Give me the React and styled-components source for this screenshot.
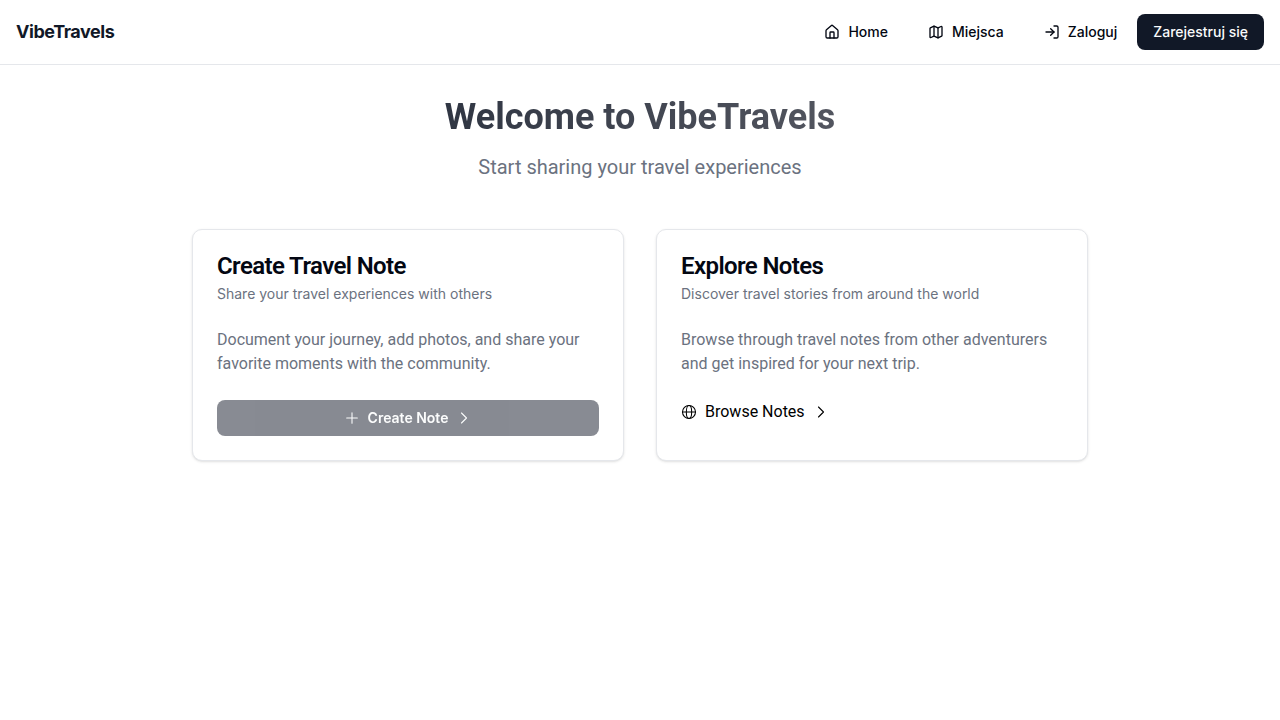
import React from "react";
import styled, { createGlobalStyle } from "styled-components";
import { House, Map, LogIn } from "lucide-react";

const uiFont = `Inter, "Liberation Sans", sans-serif`;
const textFont = `Roboto, "Liberation Sans", sans-serif`;

const GlobalStyle = createGlobalStyle`
  *, *::before, *::after { box-sizing: border-box; }
  body {
    margin: 0;
    background: #ffffff;
    color: #030712;
    font-family: ${textFont};
    font-size: 16px;
    line-height: 24px;
    -webkit-font-smoothing: antialiased;
  }
  h1, h2, p { margin: 0; }
  a { color: inherit; text-decoration: none; }
`;

const Header = styled.header`
  display: flex;
  align-items: center;
  justify-content: space-between;
  min-height: 65px;
  padding: 0 16px;
  border-bottom: 1px solid #e5e7eb;
`;

const Brand = styled.a`
  font-family: ${uiFont};
  font-size: 18px;
  line-height: 28px;
  font-weight: 700;
  letter-spacing: -0.025em;
  color: #111827;
`;

const Nav = styled.nav`
  display: flex;
  align-items: center;
  gap: 8px;
`;

const AuthLinks = styled.div`
  display: flex;
  align-items: center;
  gap: 4px;
`;

const NavLink = styled.a`
  display: inline-flex;
  align-items: center;
  gap: 8px;
  height: 36px;
  padding: 0 16px;
  border-radius: 8px;
  font-family: ${uiFont};
  font-size: 14px;
  line-height: 20px;
  font-weight: 500;
  color: ${(p) => (p.$primary ? "#f9fafb" : "#030712")};
  background: ${(p) => (p.$primary ? "#111827" : "transparent")};
`;

const Main = styled.main`
  padding: 32px 16px;
`;

const Hero = styled.section`
  display: flex;
  flex-direction: column;
  align-items: center;
  gap: 16px;
  margin-bottom: 48px;
  text-align: center;
`;

const HeroTitle = styled.h1`
  font-size: 36px;
  line-height: 40px;
  font-weight: 700;
  color: transparent;
  background: linear-gradient(to right, #303643, #52555f);
  background-clip: text;
`;

const HeroText = styled.p`
  font-size: 20px;
  line-height: 28px;
  color: #6b7280;
`;

const CardGrid = styled.section`
  display: grid;
  grid-template-columns: repeat(auto-fit, minmax(280px, 1fr));
  gap: 32px;
  max-width: 896px;
  margin: 0 auto;
`;

const Card = styled.article`
  padding: 24px;
  border: 1px solid #e5e7eb;
  border-radius: 10px;
  background: #ffffff;
  box-shadow: 0 1px 3px rgba(0, 0, 0, 0.1), 0 1px 2px -1px rgba(0, 0, 0, 0.1);
`;

const CardTitle = styled.h2`
  font-size: 24px;
  line-height: 24px;
  font-weight: 600;
  letter-spacing: -0.025em;
`;

const CardHint = styled.p`
  margin-top: 6px;
  font-family: ${uiFont};
  font-size: 14px;
  line-height: 20px;
  color: #6b7280;
`;

const CardText = styled.p`
  margin: 24px 0;
  color: #6b7280;
`;

const CreateButton = styled.button`
  display: flex;
  align-items: center;
  justify-content: center;
  gap: 8px;
  width: 100%;
  height: 36px;
  padding: 0 16px;
  border: 0;
  border-radius: 8px;
  background: #111827;
  color: #f9fafb;
  font-family: ${uiFont};
  font-size: 14px;
  line-height: 20px;
  font-weight: 600;
  opacity: 0.5;
`;

const BrowseLink = styled.a`
  display: inline-flex;
  align-items: center;
  gap: 8px;
  vertical-align: top;
  color: #000000;
`;

const Glyph = ({ children }) => (
  <svg
    width="16"
    height="16"
    viewBox="0 0 24 24"
    fill="none"
    stroke="currentColor"
    strokeWidth="1.6"
    strokeLinecap="round"
    strokeLinejoin="round"
    aria-hidden="true"
  >
    {children}
  </svg>
);

const PlusGlyph = () => (
  <Glyph>
    <path d="M12 4v16M4 12h16" />
  </Glyph>
);

const ChevronGlyph = () => (
  <Glyph>
    <path d="m8.25 4.5 7.5 7.5-7.5 7.5" />
  </Glyph>
);

const GlobeGlyph = () => (
  <Glyph>
    <circle cx="12" cy="12" r="9.75" />
    <ellipse cx="12" cy="12" rx="4" ry="9.75" />
    <path d="M2.25 12h19.5" />
  </Glyph>
);

export default function App() {
  return (
    <>
      <GlobalStyle />
      <Header>
        <Brand href="#">VibeTravels</Brand>
        <Nav>
          <NavLink href="#home"><House size={16} />Home</NavLink>
          <NavLink href="#places"><Map size={16} />Miejsca</NavLink>
          <AuthLinks>
            <NavLink href="#login"><LogIn size={16} />Zaloguj</NavLink>
            <NavLink href="#register" $primary>Zarejestruj się</NavLink>
          </AuthLinks>
        </Nav>
      </Header>
      <Main>
        <Hero>
          <HeroTitle>Welcome to VibeTravels</HeroTitle>
          <HeroText>Start sharing your travel experiences</HeroText>
        </Hero>
        <CardGrid>
          <Card>
            <CardTitle>Create Travel Note</CardTitle>
            <CardHint>Share your travel experiences with others</CardHint>
            <CardText>Document your journey, add photos, and share your favorite moments with the community.</CardText>
            <CreateButton type="button" disabled><PlusGlyph />Create Note<ChevronGlyph /></CreateButton>
          </Card>
          <Card>
            <CardTitle>Explore Notes</CardTitle>
            <CardHint>Discover travel stories from around the world</CardHint>
            <CardText>Browse through travel notes from other adventurers and get inspired for your next trip.</CardText>
            <BrowseLink href="#notes"><GlobeGlyph />Browse Notes<ChevronGlyph /></BrowseLink>
          </Card>
        </CardGrid>
      </Main>
    </>
  );
}
